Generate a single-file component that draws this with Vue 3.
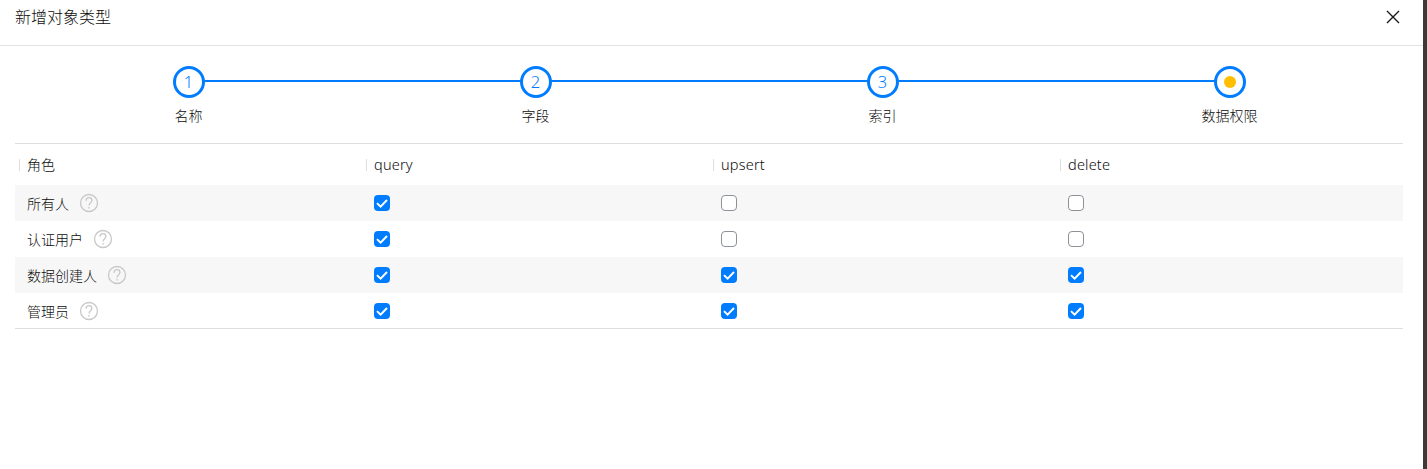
<template>
  <div class="screen">
    <section class="drawer">
      <header class="drawer-header">
        <span class="title">新增对象类型</span>
        <svg class="close" viewBox="0 0 14 14" width="14" height="14">
          <path d="M1 1 L13 13 M13 1 L1 13" />
        </svg>
      </header>

      <div class="drawer-body">
        <ol class="steps">
          <li v-for="(step, i) in steps" :key="step" class="step">
            <span class="circle">
              <i v-if="i === current" class="dot" />
              <span v-else class="num">{{ i + 1 }}</span>
            </span>
            <span class="step-label">{{ step }}</span>
          </li>
        </ol>

        <div class="table">
          <div class="row head">
            <div v-for="col in columns" :key="col" class="cell">
              <span :class="{ latin: col !== '角色' }">{{ col }}</span>
            </div>
          </div>
          <div v-for="role in roles" :key="role.name" class="row">
            <div class="cell">
              <span class="name">{{ role.name }}</span>
              <svg class="help" viewBox="0 0 20 20" width="20" height="20">
                <circle cx="10" cy="10" r="8.5" />
                <path d="M7.1 7.8 C7.1 5.7 8.3 4.7 10 4.7 C11.7 4.7 12.9 5.8 12.9 7.4 C12.9 9.6 10 9.8 10 12.6" />
                <path d="M10 14 V15.4" />
              </svg>
            </div>
            <div v-for="(on, i) in role.access" :key="i" class="cell">
              <span class="checkbox" :class="{ checked: on }">
                <svg v-if="on" viewBox="0 0 16 16" width="16" height="16">
                  <path d="M3 8.1 L6.6 11.6 L13 5" />
                </svg>
              </span>
            </div>
          </div>
        </div>
      </div>
    </section>
  </div>
</template>

<script setup>
import { ref } from 'vue'

const current = ref(3)
const steps = ['名称', '字段', '索引', '数据权限']
const columns = ['角色', 'query', 'upsert', 'delete']

const roles = ref([
  { name: '所有人', access: [true, false, false] },
  { name: '认证用户', access: [true, false, false] },
  { name: '数据创建人', access: [true, true, true] },
  { name: '管理员', access: [true, true, true] },
])
</script>

<style>
body {
  margin: 0;
  overflow: hidden;
}
</style>

<style scoped>
.screen {
  height: 100vh;
  padding-right: 4px;
  box-sizing: border-box;
  background: #3b3a39;
  color: #0c0c0c;
  font: 300 14px/20px "Noto Sans", "Noto Sans CJK SC", sans-serif;
}

.drawer {
  height: 100%;
  background: #fff;
}

.drawer-header {
  display: flex;
  justify-content: space-between;
  height: 45px;
  padding: 0 23px 0 15px;
  border-bottom: 1px solid #e2e2e2;
}

.title {
  margin-top: 5px;
  font-size: 16px;
  line-height: 24px;
}

.close {
  margin-top: 10px;
  fill: none;
  stroke: #1a1a1a;
  stroke-width: 1.4;
}

.drawer-body {
  padding: 20px 20px 0 15px;
}

.steps {
  display: grid;
  grid-template-columns: repeat(4, 1fr);
  height: 77px;
  margin: 0;
  padding: 0;
  list-style: none;
}

.step {
  position: relative;
  display: flex;
  flex-direction: column;
  align-items: center;
}

/* connector to the next step */
.step:not(:last-child)::after {
  content: "";
  position: absolute;
  top: 14px;
  left: calc(50% + 15px);
  width: calc(100% - 30px);
  height: 2px;
  background: #007dff;
}

.circle {
  display: flex;
  align-items: center;
  justify-content: center;
  width: 32px;
  height: 32px;
  box-sizing: border-box;
  border: 3px solid #007dff;
  border-radius: 50%;
  color: #007dff;
}

.num {
  font-size: 16.5px;
}

.dot {
  width: 12px;
  height: 12px;
  border-radius: 50%;
  background: #ffbf00;
}

.step-label {
  margin-top: 8px;
}

.table {
  border-top: 1px solid #dedede;
  border-bottom: 1px solid #dedede;
}

.row {
  display: grid;
  grid-template-columns: repeat(4, 1fr);
  height: 36px;
}

.row:nth-child(even) {
  background: #f7f7f7;
}

.row:last-child {
  height: 35px;
}

.head {
  height: 41px;
}

.cell {
  display: flex;
  align-items: center;
  padding-left: 12px;
}

.head .cell::before {
  content: "";
  width: 1px;
  height: 12px;
  margin: 0 7px 0 -8px;
  background: #dedede;
}

.latin {
  padding-bottom: 2px;
  font-size: 14.5px;
  letter-spacing: 0.2px;
}

.name {
  padding-top: 2px;
}

.help {
  margin-left: 10px;
  fill: none;
  stroke: #c8c8c8;
  stroke-width: 1.3;
}

.checkbox {
  width: 16px;
  height: 16px;
  box-sizing: border-box;
  border: 1px solid #8d9299;
  border-radius: 4px;
  background: #fff;
}

.checkbox.checked {
  border: 0;
  background: #007dff;
}

.checkbox svg {
  display: block;
  fill: none;
  stroke: #fff;
  stroke-width: 2;
}
</style>
